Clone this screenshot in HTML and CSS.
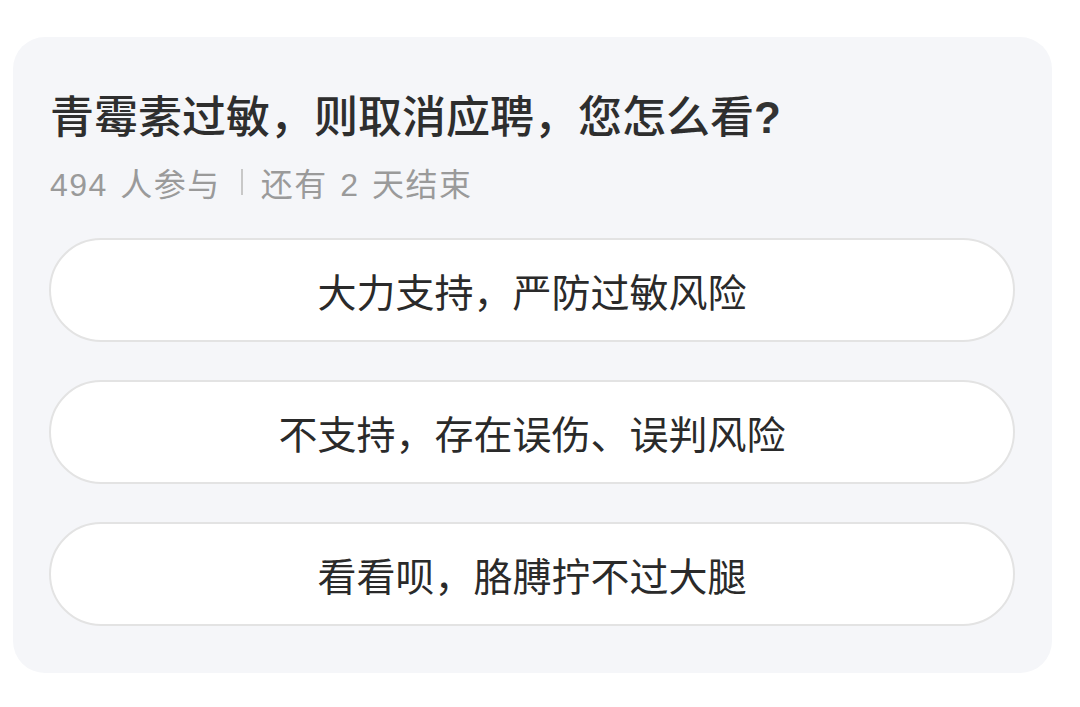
FILE: index.html
```html
<!DOCTYPE html>
<html lang="zh-CN">
<head>
<meta charset="utf-8">
<link rel="stylesheet" href="styles.css">
</head>
<body>
<div class="card">
  <h1 class="title">青霉素过敏，则取消应聘，您怎么看<span class="qm">?</span></h1>
  <div class="meta">
    <span>494 人参与</span>
    <span class="sep"></span>
    <span>还有 2 天结束</span>
  </div>
  <div class="options">
    <div class="option">大力支持，严防过敏风险</div>
    <div class="option">不支持，存在误伤、误判风险</div>
    <div class="option">看看呗，胳膊拧不过大腿</div>
  </div>
</div>
</body>
</html>
```

FILE: styles.css
```css
* { box-sizing: border-box; }
html, body { background: #ffffff; }
body {
  margin: 0;
  padding: 37px 28px 0 13px;
  font-family: "Liberation Sans", "Noto Sans CJK SC", sans-serif;
}
.card {
  width: 1039px;
  height: 636px;
  background: #f5f6f9;
  border-radius: 32px;
  padding: 53px 37px 0 36px;
}
.title {
  margin: 0;
  font-size: 44px;
  line-height: 56px;
  font-weight: 500;
  color: #2e2e2e;
  padding-left: 1px;
}
.qm {
  font-weight: 700;
  color: #333333;
}
.meta {
  margin-top: 16px;
  height: 40px;
  display: flex;
  align-items: center;
  font-size: 32px;
  letter-spacing: 1.5px;
  word-spacing: 2px;
  color: #9a9a9a;
  padding-left: 1px;
}
.sep {
  width: 2px;
  height: 26px;
  background: #c8c8c8;
  margin: 0 18px 0 20px;
}
.options {
  margin-top: 36px;
  display: flex;
  flex-direction: column;
  gap: 38px;
}
.option {
  height: 104px;
  border: 2px solid #e3e3e3;
  border-radius: 52px;
  background: #ffffff;
  display: flex;
  align-items: center;
  justify-content: center;
  font-size: 39px;
  color: #2a2a2a;
}
```
